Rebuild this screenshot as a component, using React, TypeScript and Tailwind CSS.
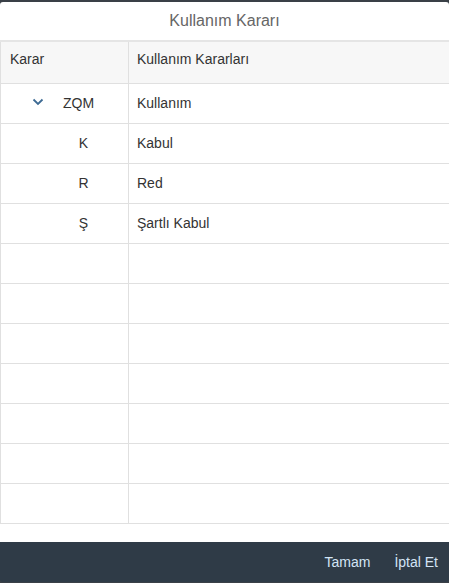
import React from "react";

const rows: { code: string; label: string; parent?: boolean }[] = [
  { code: "ZQM", label: "Kullanım", parent: true },
  { code: "K", label: "Kabul" },
  { code: "R", label: "Red" },
  { code: "Ş", label: "Şartlı Kabul" },
];

export default function App() {
  const empty = Array.from({ length: 7 });
  return (
    <div
      className="w-[449px] h-[583px] bg-[#3a4047] pt-[2px] flex flex-col"
      style={{ fontFamily: '"Liberation Sans", Arial, sans-serif' }}
    >
      <div className="flex flex-col bg-white rounded-t-[3px] overflow-hidden">
        <div className="h-[40px] flex items-center justify-center text-[16px] text-[#666666] border-b-2 border-[#e5e5e5]">
          Kullanım Kararı
        </div>
        <div className="flex flex-col border-l border-[#e0e0e0] text-[14px] text-[#333333]">
          <div className="flex h-[42px] bg-[#f7f7f7] border-b border-[#e0e0e0]">
            <div className="w-[128px] shrink-0 border-r border-[#e0e0e0] pl-[9px] pt-[8px] leading-[18px]">
              Karar
            </div>
            <div className="flex-1 pl-[8px] pt-[8px] leading-[18px]">Kullanım Kararları</div>
          </div>
          {rows.map((r) => (
            <div key={r.code} className="flex h-[40px] border-b border-[#e0e0e0]">
              <div className="w-[128px] shrink-0 border-r border-[#e0e0e0] flex items-center">
                {r.parent ? (
                  <div className="flex items-center pl-[31px]">
                    <svg width="12" height="8" viewBox="0 0 12 8" className="mt-[-3px]">
                      <path d="M1.5 1.5 L6 6 L10.5 1.5" fill="none" stroke="#3d6a93" strokeWidth="1.8" />
                    </svg>
                    <span className="ml-[19px]">{r.code}</span>
                  </div>
                ) : (
                  <div className="ml-[61px] w-[43px] text-center">{r.code}</div>
                )}
              </div>
              <div className="flex-1 pl-[8px] flex items-center">{r.label}</div>
            </div>
          ))}
          {empty.map((_, i) => (
            <div key={i} className="flex h-[40px] border-b border-[#e0e0e0]">
              <div className="w-[128px] shrink-0 border-r border-[#e0e0e0]" />
              <div className="flex-1" />
            </div>
          ))}
        </div>
        <div className="h-[18px] bg-white" />
      </div>
      <div className="h-[40px] bg-[#2f3b47] rounded-b-[3px] flex items-center justify-end pr-[11px] gap-[24px] text-[14px] text-[#d3e4f5]">
        <span>Tamam</span>
        <span>İptal Et</span>
      </div>
    </div>
  );
}
